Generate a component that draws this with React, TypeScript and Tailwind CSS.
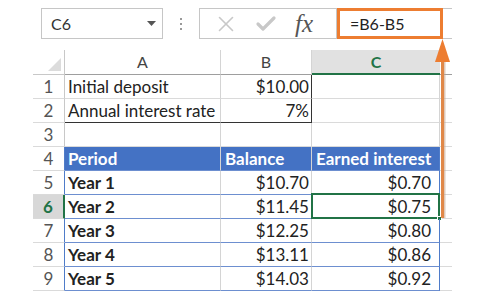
import { X, Check } from 'lucide-react';

const W = ['w-[32px]', 'w-[156px]', 'w-[91px]', 'w-[128px]', 'w-[12px]'];

const rows = [
  { n: 1, a: 'Initial deposit', b: '$10.00', c: '' },
  { n: 2, a: 'Annual interest rate', b: '7%', c: '' },
  { n: 3, a: '', b: '', c: '' },
  { n: 4, a: 'Period', b: 'Balance', c: 'Earned interest' },
  { n: 5, a: 'Year 1', b: '$10.70', c: '$0.70' },
  { n: 6, a: 'Year 2', b: '$11.45', c: '$0.75' },
  { n: 7, a: 'Year 3', b: '$12.25', c: '$0.80' },
  { n: 8, a: 'Year 4', b: '$13.11', c: '$0.86' },
  { n: 9, a: 'Year 5', b: '$14.03', c: '$0.92' },
];

function FormulaBar() {
  return (
    <div className="flex h-[31px] mt-[8px] pl-[41px] items-stretch">
      <div className="w-[122px] border border-[#c6c6c6] flex items-center justify-between pl-[9px] pr-[6px] text-[16px] text-[#333]">
        <span>C6</span>
        <svg width="9" height="5" viewBox="0 0 9 5">
          <path d="M0 0h9L4.5 5z" fill="#555" />
        </svg>
      </div>
      <div className="w-[36px] flex flex-col items-center justify-center gap-[3px]">
        <span className="w-[2px] h-[2px] bg-[#999]" />
        <span className="w-[2px] h-[2px] bg-[#999]" />
        <span className="w-[2px] h-[2px] bg-[#999]" />
      </div>
      <div className="w-[138px] border border-[#c6c6c6] flex items-center pl-[13px] text-[#c8c8c8]">
        <X size={26} strokeWidth={1.5} />
        <Check size={24} strokeWidth={3.2} className="ml-[15px]" />
        <span className="ml-[17px] font-['Liberation_Serif'] italic text-[25px] text-[#555] leading-none">fx</span>
      </div>
      <div className="flex-1 flex items-stretch max-w-[115px]">
        <div className="w-[106px] border-[3px] border-[#ed7d31] flex items-center pl-[10px] text-[16px] text-[#222]">
          =B6-B5
        </div>
        <div className="flex-1 border-y border-[#c6c6c6]" />
      </div>
    </div>
  );
}

function HeaderRow() {
  return (
    <div className="flex h-[25px] text-[16px] text-[#444]">
      <div className={`${W[0]} relative border-r border-b border-[#c8c8c8]`}>
        <svg className="absolute right-[3px] bottom-[3px]" width="13" height="13" viewBox="0 0 13 13">
          <path d="M13 0V13H0z" fill="#dcdcdc" />
        </svg>
      </div>
      <div className={`${W[1]} flex items-center justify-center border-r border-b border-r-[#d4d4d4] border-b-[#9e9e9e]`}>A</div>
      <div className={`${W[2]} flex items-center justify-center border-r border-b border-r-[#d4d4d4] border-b-[#9e9e9e]`}>B</div>
      <div className={`${W[3]} flex items-center justify-center bg-[#e1e1e1] border-b-2 border-[#217346] font-bold text-[#217346]`}>C</div>
      <div className={`${W[4]} border-b border-[#9e9e9e]`} />
    </div>
  );
}

function Row({ r }: { r: (typeof rows)[number] }) {
  const inTable = r.n >= 4;
  const head = r.n === 4;
  const active = r.n === 6;
  const boxed = r.n <= 2;
  const line = inTable ? 'border-b-[#6d8fd0]' : 'border-b-[#dadada]';
  const txt = head ? 'text-white font-bold' : 'text-[#222]';
  return (
    <div className="flex h-[24px] text-[17px] leading-none whitespace-nowrap">
      <div
        className={`${W[0]} flex items-center justify-center border-b border-b-[#dadada] ${
          active
            ? 'bg-[#d8d8d8] text-[#217346] font-bold border-r-2 border-r-[#217346]'
            : `text-[#555] border-r ${inTable ? 'border-r-[#4f7cc9]' : 'border-r-[#c8c8c8]'}`
        }`}
      >
        {r.n}
      </div>
      <div
        className={`${W[1]} flex items-center pl-[3px] border-r border-b border-r-[#d4d4d4] ${
          r.n === 2 ? 'border-b-[#333]' : line
        } ${head ? 'bg-[#4472c4]' : ''} ${inTable && !head ? 'font-bold' : ''} ${txt}`}
      >
        {r.a}
      </div>
      <div
        className={`${W[2]} flex items-center ${head ? 'justify-start pl-[4px]' : 'justify-end pr-[2px]'} border-r border-b ${
          boxed ? 'border-r-[#333]' : 'border-r-[#d4d4d4]'
        } ${r.n === 2 ? 'border-b-[#333]' : line} ${head ? 'bg-[#4472c4]' : ''} ${txt}`}
      >
        {r.b}
      </div>
      <div
        className={`${W[3]} relative flex items-center ${head ? 'justify-start pl-[4px]' : 'justify-end pr-[8px]'} border-r border-b ${
          inTable ? 'border-r-[#4f7cc9]' : 'border-r-[#d4d4d4]'
        } ${line} ${head ? 'bg-[#4472c4]' : ''} ${txt}`}
      >
        {r.c}
        {active && (
          <>
            <div className="absolute -left-px -top-[2px] right-[-1px] bottom-[-1px] border-2 border-[#217346]" />
            <div className="absolute right-[-3px] bottom-[-3px] w-[5px] h-[5px] bg-[#217346] border border-white" />
          </>
        )}
      </div>
      <div className={`${W[4]} border-b border-b-[#dadada]`} />
    </div>
  );
}

export default function App() {
  return (
    <div className="w-[500px] h-[304px] bg-white relative overflow-hidden font-['Lato',sans-serif]">
      <FormulaBar />
      <div className="mt-[11px] ml-[33px]">
        <HeaderRow />
        {rows.map(r => (
          <Row key={r.n} r={r} />
        ))}
      </div>
      {/* orange arrow pointing from C6 up to the formula */}
      <svg className="absolute left-[432px] top-[38px]" width="22" height="184" viewBox="0 0 22 184">
        <rect x="10.5" y="20" width="3" height="160" fill="#c9a58a" opacity="0.6" />
        <rect x="9" y="20" width="3" height="160" fill="#e08848" />
        <path d="M10.5 1L18 24H3z" fill="#ed7d31" />
      </svg>
    </div>
  );
}
